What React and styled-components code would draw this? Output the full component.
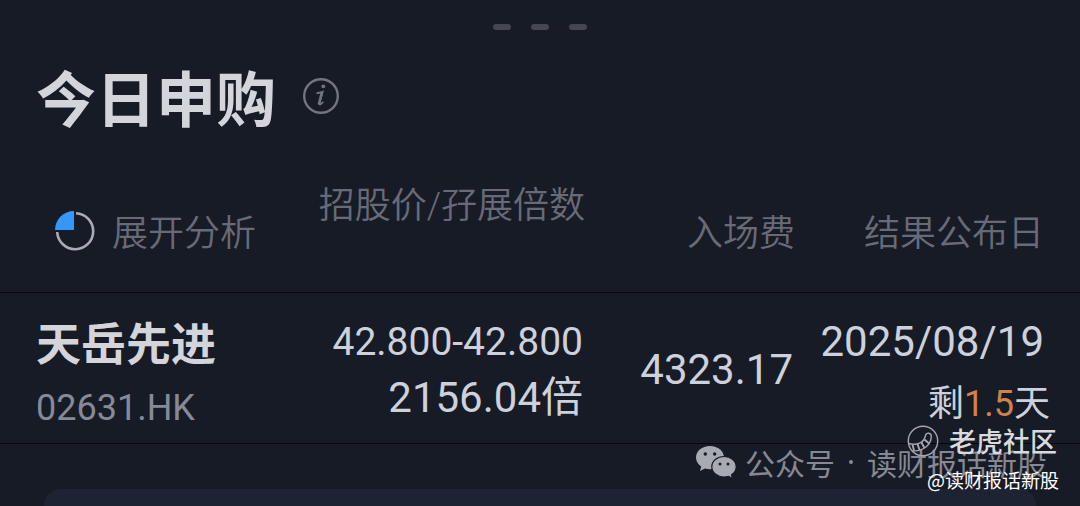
import React, { useState } from 'react';
import styled, { createGlobalStyle } from 'styled-components';

const GlobalStyle = createGlobalStyle`
    body {
        margin: 0;
        background: #171b26;
        font-family: Roboto, 'Noto Sans CJK SC', sans-serif;
        overflow: hidden;
    }
`;

const Page = styled.main`
    position: relative;
    min-height: 100vh;
    box-sizing: border-box;
    display: flex;
    flex-direction: column;
`;

const Pager = styled.div`
    display: flex;
    justify-content: center;
    gap: 20px;
    padding-top: 24px;
`;

const PagerDot = styled.span`
    width: 18px;
    height: 6px;
    border-radius: 3px;
    background: #444751;
`;

const Header = styled.header`
    display: flex;
    align-items: center;
    gap: 26px;
    padding: 20px 36px 30px;
`;

const Title = styled.h1`
    margin: 0;
    font-family: 'Noto Sans CJK SC', sans-serif;
    font-size: 60px;
    line-height: 92px;
    font-weight: 700;
    color: #d3d5da;
`;

const IconButton = styled.button`
    display: flex;
    padding: 0;
    border: 0;
    background: none;
    color: #72757f;
    cursor: pointer;
`;

const Table = styled.table`
    width: 100%;
    table-layout: fixed;
    border-collapse: collapse;
`;

const Col = styled.col`
    width: ${({ $width }) => $width};
`;

const HeadCell = styled.th`
    height: 120px;
    box-sizing: border-box;
    padding: ${({ $top }) => ($top ? '6px' : '4px')} ${({ $last }) => ($last ? '36px' : '0')} 0 0;
    vertical-align: ${({ $top }) => ($top ? 'top' : 'middle')};
    border-bottom: 1px solid #05070c;
    font-family: Roboto, 'Noto Sans CJK SC DemiLight', 'Noto Sans CJK SC', sans-serif;
    font-size: 36px;
    line-height: 56px;
    font-weight: 350;
    text-align: right;
    white-space: nowrap;
    color: #686b77;
`;

const AnalysisButton = styled.button`
    display: flex;
    align-items: center;
    gap: 16px;
    padding: 0 0 0 54px;
    border: 0;
    background: none;
    font: inherit;
    color: inherit;
    cursor: pointer;

    svg {
        margin-bottom: 6px;
    }
`;

const Cell = styled.td`
    height: 146px;
    padding: 4px ${({ $last }) => ($last ? '30px' : '2px')} 0 0;
    border-bottom: 1px solid #05070c;
    text-align: right;
    white-space: nowrap;
    color: #cdd1dc;
`;

const NameCell = styled(Cell)`
    padding-top: 14px;
    padding-left: 36px;
    height: 136px;
    text-align: left;
`;

const ResultCell = styled(Cell)`
    padding-top: 10px;
    height: 140px;
`;

const StockName = styled.div`
    font-family: 'Noto Sans CJK SC', sans-serif;
    font-size: 45px;
    line-height: 66px;
    font-weight: 700;
    color: #d3d5da;
`;

const StockCode = styled.div`
    font-size: 36px;
    line-height: 66px;
    color: #868a98;
`;

const Value = styled.div`
    font-size: ${({ $small }) => ($small ? '39px' : '42px')};
    line-height: 56px;
`;

const ResultDate = styled.div`
    padding-right: 6px;
    font-size: 42px;
    line-height: 62px;
`;

const Remaining = styled.div`
    font-size: 36px;
    line-height: 62px;
`;

const Days = styled.span`
    color: #d0814c;
`;

const Card = styled.section`
    flex: 1;
    margin: 45px 44px 0;
    border-radius: 16px 16px 0 0;
    background: #1e2333;
`;

const SourceMark = styled.div`
    position: absolute;
    right: 33px;
    bottom: 22px;
    display: flex;
    align-items: center;
    gap: 8px;
    font-family: 'Noto Sans CJK SC', sans-serif;
    font-size: 30px;
    line-height: 44px;
    white-space: nowrap;
    color: #868993;
`;

const SourceDot = styled.span`
    width: 4px;
    height: 4px;
    margin: 0 6px;
    border-radius: 50%;
    background: #868993;
`;

const Community = styled.div`
    position: absolute;
    right: 21px;
    bottom: 12px;
    display: flex;
    flex-direction: column;
    align-items: flex-end;
    font-family: 'Noto Sans CJK SC', sans-serif;
    color: #fff;
`;

const Brand = styled.div`
    display: flex;
    align-items: center;
    gap: 10px;
    padding-right: 2px;
    font-size: 27px;
    line-height: 40px;
    font-weight: 500;
    color: #d9dade;
`;

const Author = styled.div`
    padding-top: 5px;
    font-size: 19px;
    line-height: 28px;
`;

const InfoIcon = () => (
    <svg width="38" height="38" viewBox="0 0 38 38" fill="none" aria-hidden="true">
        <circle cx="19" cy="19" r="16.8" stroke="currentColor" strokeWidth="2.4" />
        <circle cx="21.3" cy="9.3" r="1.9" fill="currentColor" />
        <path
            d="M14.500 16.200C17 15.900 18.700 15.500 20.600 14.800L17.400 26.500C17.200 28.300 19 27.600 21.300 24.800"
            stroke="currentColor"
            strokeWidth="1.800"
        />
        <path d="M20 15.200L16.800 27.500" stroke="currentColor" strokeWidth="2.600" />
    </svg>
);

const PieIcon = () => (
    <svg width="42" height="42" viewBox="0 0 42 42" fill="none" aria-hidden="true">
        <path d="M22 3.200A18 18 0 1 1 3.200 22" stroke="#a9acb8" strokeWidth="2.600" />
        <path d="M20 1V20H1A19 19 0 0 1 20 1Z" fill="#3598f7" />
    </svg>
);

const WechatIcon = () => (
    <svg width="42" height="34" viewBox="0 0 42 34" aria-hidden="true">
        <path
            d="M15 1C7 1 1 6 1 12.500C1 16.200 3 19.300 6.200 21.500L5 26L10 23.500Q12.500 24.200 15 24.200C23 24.200 29 19 29 12.500S23 1 15 1Z"
            fill="#a8aab1"
        />
        <path
            d="M29 11.500C22 11.500 16.800 16 16.800 21.800S22 32 29 32Q31.300 32 33.500 31.300L37.500 33.500L36.500 29.800C39.500 28 41.200 25 41.200 21.800C41.200 16 36 11.500 29 11.500Z"
            fill="#a8aab1"
            stroke="#171b26"
            strokeWidth="1.200"
        />
        <circle cx="10.300" cy="9" r="1.700" fill="#171b26" />
        <circle cx="19.700" cy="9" r="1.700" fill="#171b26" />
        <circle cx="25" cy="19" r="1.500" fill="#171b26" />
        <circle cx="33" cy="19" r="1.500" fill="#171b26" />
    </svg>
);

const TigerIcon = () => (
    <svg width="32" height="32" viewBox="0 0 32 32" fill="none" stroke="#a5a7af" aria-hidden="true">
        <circle cx="16" cy="16" r="14.700" strokeWidth="1.400" />
        <path d="M1.500 18.500C10 20.500 17 18 18.500 10.500C19.500 7 24.500 7.500 24.300 11.500C24 20 17 26 5 26" strokeWidth="1.400" />
        <path d="M5.500 19.500L7 25.500M10.500 19L12.500 25M14.500 17.500L17.500 23M17.500 14.500L22 18.500" strokeWidth="1.900" />
    </svg>
);

const stocks = [
    {
        name: '天岳先进',
        code: '02631.HK',
        price: '42.800-42.800',
        multiple: '2156.04倍',
        fee: '4323.17',
        date: '2025/08/19',
        days: '1.5',
    },
];

const App = () => {
    const [expanded, setExpanded] = useState(false);

    return (
        <>
            <GlobalStyle />
            <Page>
                <Pager>
                    <PagerDot />
                    <PagerDot />
                    <PagerDot />
                </Pager>
                <Header>
                    <Title>今日申购</Title>
                    <IconButton type="button" aria-label="说明">
                        <InfoIcon />
                    </IconButton>
                </Header>
                <Table>
                    <colgroup>
                        <Col />
                        <Col $width="285px" />
                        <Col $width="210px" />
                        <Col $width="285px" />
                    </colgroup>
                    <thead>
                        <tr>
                            <HeadCell scope="col">
                                <AnalysisButton
                                    type="button"
                                    aria-expanded={expanded}
                                    onClick={() => setExpanded(!expanded)}
                                >
                                    <PieIcon />
                                    展开分析
                                </AnalysisButton>
                            </HeadCell>
                            <HeadCell scope="col" $top>招股价/孖展倍数</HeadCell>
                            <HeadCell scope="col">入场费</HeadCell>
                            <HeadCell scope="col" $last>结果公布日</HeadCell>
                        </tr>
                    </thead>
                    <tbody>
                        {stocks.map((stock) => (
                            <tr key={stock.code}>
                                <NameCell>
                                    <StockName>{stock.name}</StockName>
                                    <StockCode>{stock.code}</StockCode>
                                </NameCell>
                                <Cell>
                                    <Value $small>{stock.price}</Value>
                                    <Value>{stock.multiple}</Value>
                                </Cell>
                                <Cell>
                                    <Value>{stock.fee}</Value>
                                </Cell>
                                <ResultCell $last>
                                    <ResultDate>{stock.date}</ResultDate>
                                    <Remaining>剩<Days>{stock.days}</Days>天</Remaining>
                                </ResultCell>
                            </tr>
                        ))}
                    </tbody>
                </Table>
                <Card />
                <SourceMark>
                    <WechatIcon />
                    <span>公众号</span>
                    <SourceDot />
                    <span>读财报话新股</span>
                </SourceMark>
                <Community>
                    <Brand>
                        <TigerIcon />
                        老虎社区
                    </Brand>
                    <Author>@读财报话新股</Author>
                </Community>
            </Page>
        </>
    );
};

export default App;
